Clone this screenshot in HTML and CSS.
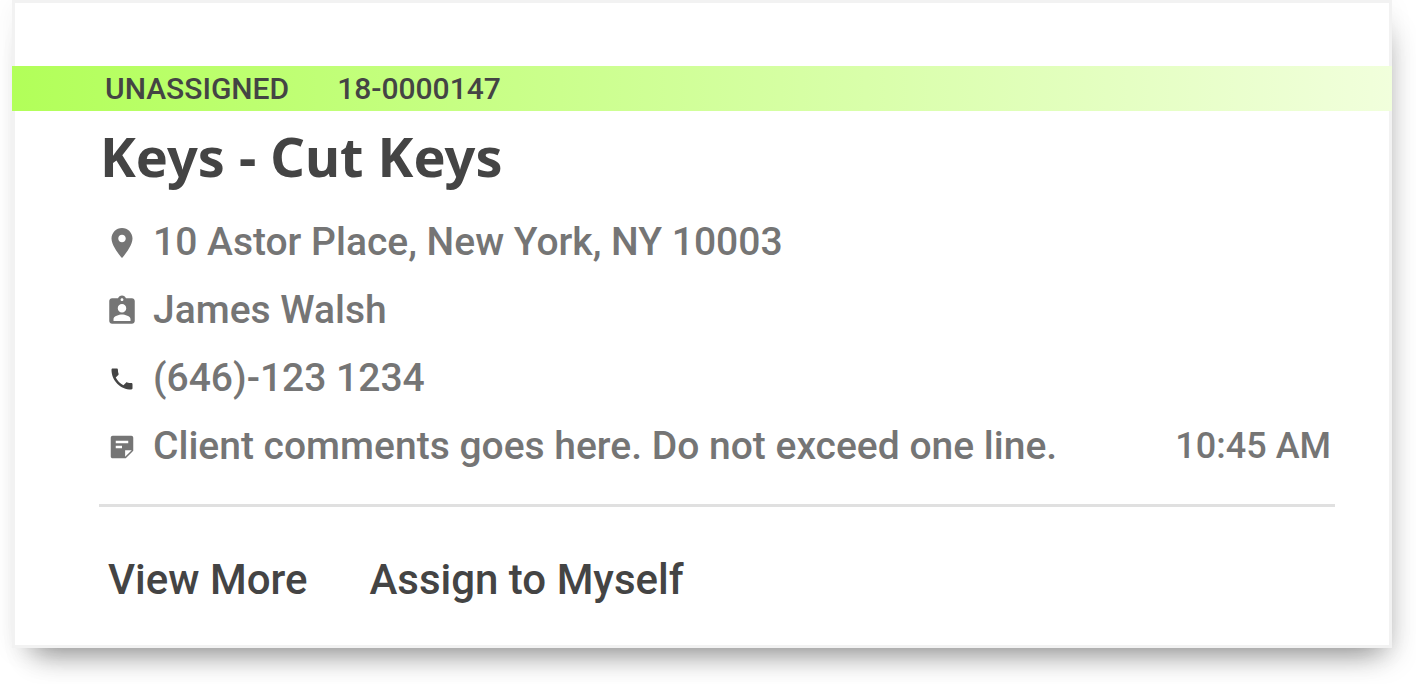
FILE: index.html
```
<!DOCTYPE html>
<html lang="en">
<head>
  <meta charset="UTF-8" />
  <meta name="viewport" content="width=device-width, initial-scale=1.0"/>
  <title>Work Order</title>
  <link rel="stylesheet" href="styles.css">
</head>
<body>

<article class="card">
  <div class="status-bar">
    <span>UNASSIGNED</span>
    <span>18-0000147</span>
  </div>

  <div class="card-body">
    <h1>Keys - Cut Keys</h1>

    <ul class="details">
      <li>
        <span class="icon">
          <svg width="36" height="36" viewBox="0 0 24 24"><path d="M12 2C8.13 2 5 5.13 5 9c0 5.25 7 13 7 13s7-7.75 7-13c0-3.87-3.13-7-7-7zm0 9.5c-1.38 0-2.5-1.12-2.5-2.5s1.12-2.5 2.5-2.5 2.5 1.12 2.5 2.5-1.12 2.5-2.5 2.5z"/></svg>
        </span>
        <span>10 Astor Place, New York, NY 10003</span>
      </li>
      <li>
        <span class="icon">
          <svg width="34" height="34" viewBox="0 0 24 24"><path d="M19 3h-4.18C14.4 1.84 13.3 1 12 1c-1.3 0-2.4.84-2.82 2H5c-1.1 0-2 .9-2 2v14c0 1.1.9 2 2 2h14c1.1 0 2-.9 2-2V5c0-1.1-.9-2-2-2zm-7 0c.55 0 1 .45 1 1s-.45 1-1 1-1-.45-1-1 .45-1 1-1zm0 4c1.66 0 3 1.34 3 3s-1.34 3-3 3-3-1.34-3-3 1.34-3 3-3zm6 12H6v-1.4c0-2 4-3.1 6-3.1s6 1.1 6 3.1V19z"/></svg>
        </span>
        <span>James Walsh</span>
      </li>
      <li>
        <span class="icon phone">
          <svg width="28" height="28" viewBox="0 0 24 24"><path d="M6.62 10.79c1.44 2.83 3.76 5.14 6.59 6.59l2.2-2.2c.27-.27.67-.36 1.02-.24 1.12.37 2.33.57 3.57.57.55 0 1 .45 1 1V20c0 .55-.45 1-1 1-9.39 0-17-7.61-17-17 0-.55.45-1 1-1h3.5c.55 0 1 .45 1 1 0 1.25.2 2.45.57 3.57.11.35.03.74-.25 1.02l-2.2 2.2z"/></svg>
        </span>
        <span>(646)-123 1234</span>
      </li>
      <li>
        <span class="icon">
          <svg width="30" height="30" viewBox="0 0 24 24"><path fill-rule="evenodd" d="M4.500 3h15c.8 0 1.500.7 1.500 1.500V15l-6 6H4.500c-.8 0-1.500-.7-1.500-1.500v-15C3 3.700 3.700 3 4.500 3zM7 7v2h10V7zM7 11v2h5v-2zM14.500 19.800l5.300-5.300h-5.300z"/></svg>
        </span>
        <span>Client comments goes here. Do not exceed one line.</span>
        <time datetime="10:45">10:45 AM</time>
      </li>
    </ul>

    <div class="actions">
      <button type="button">View More</button>
      <button type="button">Assign to Myself</button>
    </div>
  </div>
</article>

</body>
</html>
```
FILE: styles.css
```
* { box-sizing: border-box; }

body {
  margin: 0;
  padding: 0 24px 36px 12px;
  font-family: Roboto, sans-serif;
  font-weight: 500;
  background: #fff;
  color: #444;
}

.card {
  padding: 63px 0 35px;
  border: 3px solid #f2f2f2;
  background: #fff;
  box-shadow: 0 4px 24px rgba(0, 0, 0, 0.05), 2px 22px 28px -20px rgba(0, 0, 0, 0.3), 10px 20px 28px -12px rgba(0, 0, 0, 0.22);
}

/* runs over the card's side borders */
.status-bar {
  display: flex;
  gap: 48px;
  margin: 0 -3px;
  padding: 0 93px;
  font-size: 30px;
  line-height: 45px;
  background: linear-gradient(to right, #b2ff59, #f1ffdc);
}

.card-body {
  padding: 0 54px 0 84px;
}

h1 {
  margin: 0 0 7px;
  padding-left: 1px;
  font-family: "Noto Sans", sans-serif;
  font-size: 54px;
  font-weight: 700;
  line-height: 90px;
}

.details {
  margin: 0;
  padding: 0 4px 24px;
  list-style: none;
  border-bottom: 3px solid #e0e0e0;
  color: #757575;
  font-size: 39px;
  line-height: 68px;
}

.details li {
  display: flex;
  align-items: center;
}

.icon {
  display: flex;
  justify-content: center;
  width: 38px;
  padding-top: 2px;
  margin-right: 12px;
}

.icon svg {
  fill: currentColor;
}

.phone {
  color: #444;
}

.details time {
  margin-left: auto;
  font-size: 36px;
}

.actions {
  display: flex;
  gap: 62px;
  padding: 43px 9px 0;
}

.actions button {
  padding: 0;
  border: none;
  background: none;
  color: inherit;
  font: inherit;
  font-size: 42px;
  line-height: 60px;
  cursor: pointer;
}
```
